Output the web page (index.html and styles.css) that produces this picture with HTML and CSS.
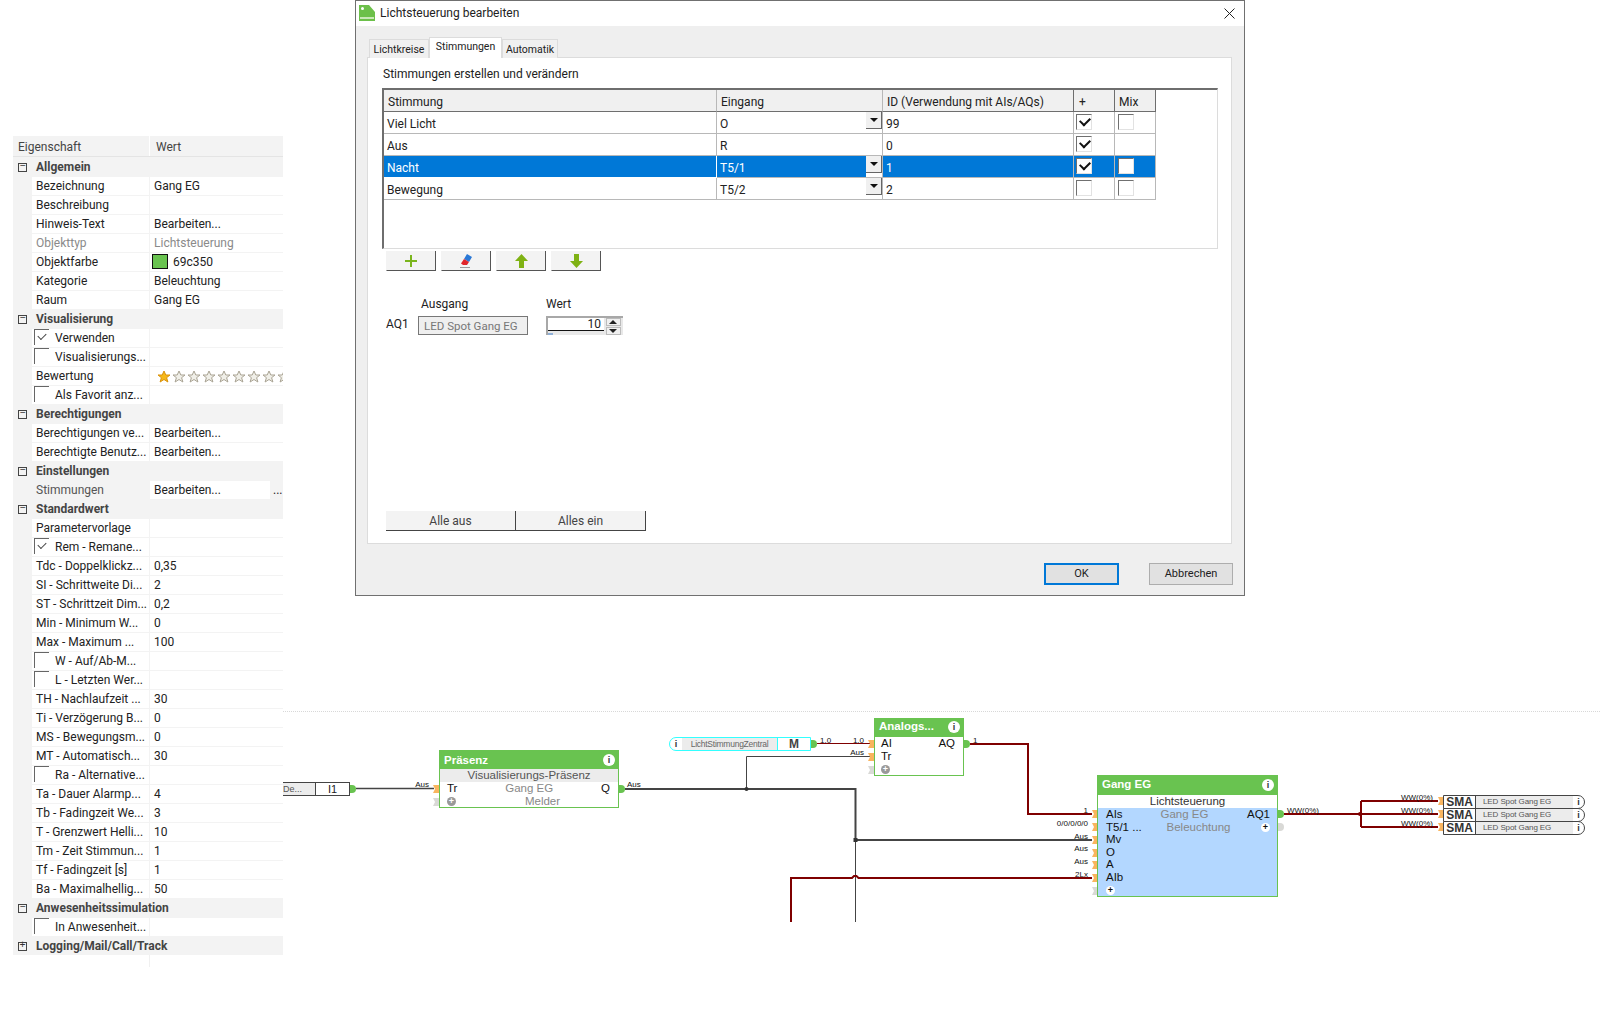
FILE: index.html
```html
<!DOCTYPE html>
<html lang="de">
<head>
<meta charset="utf-8">
<title>Lichtsteuerung bearbeiten</title>
<link rel="stylesheet" href="styles.css">
</head>
<body>
<svg class="defs" width="0" height="0" aria-hidden="true">
  <defs>
    <symbol id="star" viewBox="0 0 14 14"><path d="M7 1l1.8 4h4.2l-3.4 2.7 1.3 4.3L7 9.500 3.100 12l1.300-4.300L1 5h4.200z"/></symbol>
  </defs>
</svg>

<section class="panel">
  <div class="prow phead"><span class="ph1">Eigenschaft</span><span class="ph2">Wert</span></div>
  <div class="prow group"><i class="tog">&minus;</i><b>Allgemein</b></div>
  <div class="prow"><i></i><span class="n">Bezeichnung</span><span class="v">Gang EG</span></div>
  <div class="prow"><i></i><span class="n">Beschreibung</span><span class="v"></span></div>
  <div class="prow"><i></i><span class="n">Hinweis-Text</span><span class="v">Bearbeiten...</span></div>
  <div class="prow off"><i></i><span class="n">Objekttyp</span><span class="v">Lichtsteuerung</span></div>
  <div class="prow"><i></i><span class="n">Objektfarbe</span><span class="v"><em class="swatch"></em>69c350</span></div>
  <div class="prow"><i></i><span class="n">Kategorie</span><span class="v">Beleuchtung</span></div>
  <div class="prow"><i></i><span class="n">Raum</span><span class="v">Gang EG</span></div>
  <div class="prow group"><i class="tog">&minus;</i><b>Visualisierung</b></div>
  <div class="prow"><i></i><span class="n chk on">Verwenden</span><span class="v"></span></div>
  <div class="prow"><i></i><span class="n chk">Visualisierungs...</span><span class="v"></span></div>
  <div class="prow"><i></i><span class="n">Bewertung</span><span class="v stars">
    <svg class="star gold"><use href="#star"/></svg><svg class="star"><use href="#star"/></svg><svg class="star"><use href="#star"/></svg><svg class="star"><use href="#star"/></svg><svg class="star"><use href="#star"/></svg><svg class="star"><use href="#star"/></svg><svg class="star"><use href="#star"/></svg><svg class="star"><use href="#star"/></svg><svg class="star"><use href="#star"/></svg></span></div>
  <div class="prow"><i></i><span class="n chk">Als Favorit anz...</span><span class="v"></span></div>
  <div class="prow group"><i class="tog">&minus;</i><b>Berechtigungen</b></div>
  <div class="prow"><i></i><span class="n">Berechtigungen ve...</span><span class="v">Bearbeiten...</span></div>
  <div class="prow"><i></i><span class="n">Berechtigte Benutz...</span><span class="v">Bearbeiten...</span></div>
  <div class="prow group"><i class="tog">&minus;</i><b>Einstellungen</b></div>
  <div class="prow active"><i></i><span class="n">Stimmungen</span><span class="v"><span class="vbox">Bearbeiten...</span><span class="dots">...</span></span></div>
  <div class="prow group"><i class="tog">&minus;</i><b>Standardwert</b></div>
  <div class="prow"><i></i><span class="n">Parametervorlage</span><span class="v"></span></div>
  <div class="prow"><i></i><span class="n chk on">Rem - Remane...</span><span class="v"></span></div>
  <div class="prow"><i></i><span class="n">Tdc - Doppelklickz...</span><span class="v">0,35</span></div>
  <div class="prow"><i></i><span class="n">SI - Schrittweite Di...</span><span class="v">2</span></div>
  <div class="prow"><i></i><span class="n">ST - Schrittzeit Dim...</span><span class="v">0,2</span></div>
  <div class="prow"><i></i><span class="n">Min - Minimum W...</span><span class="v">0</span></div>
  <div class="prow"><i></i><span class="n">Max - Maximum ...</span><span class="v">100</span></div>
  <div class="prow"><i></i><span class="n chk">W - Auf/Ab-M...</span><span class="v"></span></div>
  <div class="prow"><i></i><span class="n chk">L - Letzten Wer...</span><span class="v"></span></div>
  <div class="prow"><i></i><span class="n">TH - Nachlaufzeit ...</span><span class="v">30</span></div>
  <div class="prow"><i></i><span class="n">Ti - Verzögerung B...</span><span class="v">0</span></div>
  <div class="prow"><i></i><span class="n">MS - Bewegungsm...</span><span class="v">0</span></div>
  <div class="prow"><i></i><span class="n">MT - Automatisch...</span><span class="v">30</span></div>
  <div class="prow"><i></i><span class="n chk">Ra - Alternative...</span><span class="v"></span></div>
  <div class="prow"><i></i><span class="n">Ta - Dauer Alarmp...</span><span class="v">4</span></div>
  <div class="prow"><i></i><span class="n">Tb - Fadingzeit We...</span><span class="v">3</span></div>
  <div class="prow"><i></i><span class="n">T - Grenzwert Helli...</span><span class="v">10</span></div>
  <div class="prow"><i></i><span class="n">Tm - Zeit Stimmun...</span><span class="v">1</span></div>
  <div class="prow"><i></i><span class="n">Tf - Fadingzeit [s]</span><span class="v">1</span></div>
  <div class="prow"><i></i><span class="n">Ba - Maximalhellig...</span><span class="v">50</span></div>
  <div class="prow group"><i class="tog">&minus;</i><b>Anwesenheitssimulation</b></div>
  <div class="prow"><i></i><span class="n chk">In Anwesenheit...</span><span class="v"></span></div>
  <div class="prow group"><i class="tog">+</i><b>Logging/Mail/Call/Track</b></div>
  <div class="ptail"></div>
</section>

<section class="diagram">
  <svg class="wires" viewBox="283 711 1317 220" width="1317" height="220">
    <line class="dotline" x1="283" y1="711.500" x2="1600" y2="711.500"/>
    <g fill="none" stroke="#444">
      <path stroke-width="1.500" d="M356 788.500H434"/>
      <path stroke-width="2" d="M625 789H855.500V840H1092"/>
      <path stroke-width="1" d="M746.500 789V756.500H871"/>
      <path stroke-width="1" d="M855.500 840V922"/>
    </g>
    <g fill="none" stroke="#7f0000">
      <path stroke-width="1" d="M817 743.500H870"/>
      <path stroke-width="2" d="M970 744H1028V814H1092"/>
      <path stroke-width="2" d="M791 922V878H852l2-2h2.500l2 2H1092"/>
      <path stroke-width="2" d="M1284 814H1438M1361 827V801M1361 801H1438M1361 827H1438"/>
    </g>
    <g fill="#333">
      <circle cx="746.500" cy="789" r="2"/>
      <rect x="853.500" y="838" width="4" height="4"/>
      <circle cx="1360" cy="814" r="2" fill="#7f0000"/>
    </g>
    <g class="pin-in">
      <path d="M433 785h6v8h-6l2-4z"/>
      <path d="M868 740h6v8h-6l2-4z"/><path d="M868 753h6v8h-6l2-4z"/>
      <path d="M1092 810h5v8h-5l2-4z"/><path d="M1092 823h5v8h-5l2-4z"/><path d="M1092 836h5v8h-5l2-4z"/><path d="M1092 849h5v8h-5l2-4z"/><path d="M1092 861h5v8h-5l2-4z"/><path d="M1092 874h5v8h-5l2-4z"/>
      <path d="M1438 797h5v8h-5l2-4z"/><path d="M1438 810h5v8h-5l2-4z"/><path d="M1438 823h5v8h-5l2-4z"/>
    </g>
    <g class="pin-free">
      <path d="M433 798h6v8h-6l2-4z"/><path d="M868 766h6v8h-6l2-4z"/><path d="M1092 887h5v8h-5l2-4z"/>
      <path d="M1278 823h2a4 4 0 0 1 0 8h-2z"/>
    </g>
    <g class="pin-out">
      <path d="M350 785h2a4 4 0 0 1 0 8h-2z"/><path d="M619 785h2a4 4 0 0 1 0 8h-2z"/>
      <path d="M811 740h2a4 4 0 0 1 0 8h-2z"/><path d="M964 740h2a4 4 0 0 1 0 8h-2z"/>
      <path d="M1278 810h2a4 4 0 0 1 0 8h-2z"/>
    </g>
    <g class="wlabel">
      <text x="429" y="787" text-anchor="end">Aus</text>
      <text x="627" y="787">Aus</text>
      <text x="820" y="743">1.0</text>
      <text x="864" y="743" text-anchor="end">1.0</text>
      <text x="864" y="755" text-anchor="end">Aus</text>
      <text x="973" y="743">1</text>
      <text x="1088" y="813" text-anchor="end">1</text>
      <text x="1088" y="826" text-anchor="end">0/0/0/0/0</text>
      <text x="1088" y="839" text-anchor="end">Aus</text>
      <text x="1088" y="851" text-anchor="end">Aus</text>
      <text x="1088" y="864" text-anchor="end">Aus</text>
      <text x="1088" y="877" text-anchor="end">2Lx</text>
      <text x="1287" y="813">WW(0%)</text>
      <text x="1401" y="800">WW(0%)</text>
      <text x="1401" y="813">WW(0%)</text>
      <text x="1401" y="826">WW(0%)</text>
    </g>
  </svg>

  <div class="stub stub-i1"><span class="stub-label">De...</span><span class="stub-key">I1</span></div>

  <div class="stub stub-m"><span class="stub-info">i</span><span class="stub-label">LichtStimmungZentral</span><span class="stub-key">M</span></div>

  <div class="node node-p">
    <div class="nhead"><span>Präsenz</span><span class="info">i</span></div>
    <div class="nsub">Visualisierungs-Präsenz</div>
    <div class="nrow"><span>Tr</span><span class="mid">Gang EG</span><span>Q</span></div>
    <div class="nrow"><span class="plus">+</span><span class="mid shift">Melder</span><span></span></div>
  </div>

  <div class="node node-a">
    <div class="nhead"><span>Analogs...</span><span class="info">i</span></div>
    <div class="nrow"><span>AI</span><span class="mid"></span><span>AQ</span></div>
    <div class="nrow"><span>Tr</span><span class="mid"></span><span></span></div>
    <div class="nrow"><span class="plus">+</span><span class="mid"></span><span></span></div>
  </div>

  <div class="node node-g">
    <div class="nhead"><span>Gang EG</span><span class="info">i</span></div>
    <div class="nsub white">Lichtsteuerung</div>
    <div class="gbody">
      <div class="nrow"><span>AIs</span><span class="mid left">Gang EG</span><span>AQ1</span></div>
      <div class="nrow"><span>T5/1 ...</span><span class="mid right">Beleuchtung</span><span class="plus white">+</span></div>
      <div class="nrow"><span>Mv</span></div>
      <div class="nrow"><span>O</span></div>
      <div class="nrow"><span>A</span></div>
      <div class="nrow"><span>AIb</span></div>
      <div class="nrow"><span class="plus white">+</span></div>
    </div>
  </div>

  <div class="sma-stack">
    <div class="sma"><b>SMA</b><span class="sma-l">LED Spot Gang EG</span><span class="sma-i">i</span></div>
    <div class="sma"><b>SMA</b><span class="sma-l">LED Spot Gang EG</span><span class="sma-i">i</span></div>
    <div class="sma"><b>SMA</b><span class="sma-l">LED Spot Gang EG</span><span class="sma-i">i</span></div>
  </div>
</section>

<section class="dialog">
  <header class="titlebar">
    <svg class="appicon" viewBox="0 0 16 16" width="16" height="16"><path fill="#6cc04a" d="M0 0h10l6 7v9H0z"/><circle cx="3.500" cy="3.500" r="1.500" fill="#fff"/><rect x="1" y="12" width="14" height="2" fill="#c9e8b8"/></svg>
    <span class="title">Lichtsteuerung bearbeiten</span>
    <svg class="closex" viewBox="0 0 11 11" width="11" height="11"><path d="M.5.500l10 10M10.500.500l-10 10" stroke="#222" fill="none"/></svg>
  </header>
  <div class="dbody">
    <nav class="tabs">
      <span class="tab t1">Lichtkreise</span>
      <span class="tab t2 sel">Stimmungen</span>
      <span class="tab t3">Automatik</span>
    </nav>
    <div class="pane">
      <div class="pane-title">Stimmungen erstellen und verändern</div>
      <div class="gridbox">
        <div class="grow ghead">
          <span class="c1">Stimmung</span><span class="c2">Eingang</span><span class="c3">ID (Verwendung mit AIs/AQs)</span><span class="c4">+</span><span class="c5">Mix</span>
        </div>
        <div class="grow">
          <span class="c1">Viel Licht</span><span class="c2">O<em class="combo"></em></span><span class="c3">99</span><span class="c4"><em class="cb on"></em></span><span class="c5"><em class="cb"></em></span>
        </div>
        <div class="grow">
          <span class="c1">Aus</span><span class="c2">R</span><span class="c3">0</span><span class="c4"><em class="cb on"></em></span><span class="c5"></span>
        </div>
        <div class="grow selrow">
          <span class="c1">Nacht</span><span class="c2">T5/1<em class="combo"></em></span><span class="c3">1</span><span class="c4"><em class="cb on"></em></span><span class="c5"><em class="cb"></em></span>
        </div>
        <div class="grow">
          <span class="c1">Bewegung</span><span class="c2">T5/2<em class="combo"></em></span><span class="c3">2</span><span class="c4"><em class="cb"></em></span><span class="c5"><em class="cb"></em></span>
        </div>
      </div>
      <div class="toolbar">
        <button class="tbtn"><svg viewBox="0 0 12 12" width="12" height="12"><path d="M5 0h2v5h5v2H7v5H5V7H0V5h5z" fill="#7ab51d"/></svg></button>
        <button class="tbtn"><svg viewBox="0 0 14 16" width="14" height="16"><path d="M8 1l5 3-3 5-5-3z" fill="#2a78d6"/><path d="M5 6l5 3-2 3H4L2 10.500z" fill="#e0242a"/><rect x="1" y="14" width="10" height="1" fill="#999"/></svg></button>
        <button class="tbtn"><svg viewBox="0 0 13 14" width="13" height="14"><path d="M6.500 0L13 7H9v7H4V7H0z" fill="#7fb214"/></svg></button>
        <button class="tbtn"><svg viewBox="0 0 13 14" width="13" height="14"><path d="M6.500 14L0 7h4V0h5v7h4z" fill="#7fb214"/></svg></button>
      </div>
      <div class="outs">
        <span></span><span class="lab-a">Ausgang</span><span>Wert</span>
        <span class="aq">AQ1</span>
        <span class="field">LED Spot Gang EG</span>
        <span class="spin"><span class="spin-val">10</span><span class="spin-btns"><i class="up"></i><i class="down"></i></span><i class="spin-mark"></i></span>
      </div>
      <div class="allrow">
        <button class="allbtn">Alle aus</button>
        <button class="allbtn">Alles ein</button>
      </div>
    </div>
    <footer class="dfoot">
      <button class="dbtn ok">OK</button>
      <button class="dbtn">Abbrechen</button>
    </footer>
  </div>
</section>
</body>
</html>
```
FILE: styles.css
```css
* { box-sizing: border-box; }
html, body { margin: 0; padding: 0; }
body {
  position: relative;
  width: 1600px;
  height: 1024px;
  overflow: hidden;
  background: #fff;
  font: 12px/16px Roboto, "Liberation Sans", sans-serif;
  color: #222;
}
button { font: inherit; color: inherit; padding: 0; cursor: default; }
em, i { font-style: normal; }
.defs { position: absolute; }

/* property panel */
.panel { position: absolute; left: 13px; top: 136px; width: 270px; }
.prow {
  display: grid;
  grid-template-columns: 18px 117px 133px;
  column-gap: 1px;
  height: 19px;
  background: #f3f3f3;
  line-height: 18px;
}
.prow .n, .prow .v {
  display: block;
  margin-top: 1px;
  height: 18px;
  background: #fff;
  white-space: nowrap;
  overflow: hidden;
}
.prow .n { padding-left: 4px; }
.prow .v { padding-left: 4px; position: relative; }
.phead {
  display: flex;
  height: 21px;
  line-height: 22px;
  border-bottom: 1px solid #e4e4e4;
  color: #444;
}
.ph1 { width: 137px; padding-left: 5px; border-right: 1px solid #fff; }
.ph2 { padding-left: 5px; }
.group { display: flex; align-items: center; line-height: 19px; padding-top: 2px; }
.group b { margin-left: 8px; color: #444; font-weight: 700; }
.tog {
  width: 9px; height: 9px; margin-left: 5px;
  border: 1px solid #444;
  font: 10px/6px "Liberation Mono", monospace;
  text-align: center;
  color: #333;
}
.off .n, .off .v { color: #8a8a8a; }
.swatch {
  display: inline-block;
  width: 16px; height: 15px;
  margin: 1px 5px 0 -2px;
  vertical-align: top;
  background: #69c350;
  border: 1px solid #111;
}
.chk { position: relative; padding-left: 23px !important; overflow: visible !important; }
.chk::before {
  content: "";
  position: absolute; left: 2px; top: 0;
  width: 14px; height: 15px;
  border-left: 1px solid #666;
  border-top: 1px solid #666;
}
.chk.on::after {
  content: "";
  position: absolute; left: 6px; top: 4px;
  width: 7px; height: 4px;
  border-left: 1.200px solid #444;
  border-bottom: 1.200px solid #444;
  transform: rotate(-45deg);
}
.active .n { background: transparent; color: #555; }
.active .v { background: transparent; padding: 0; display: flex; }
.vbox { width: 120px; background: #fff; padding-left: 4px; }
.dots { padding-left: 3px; }
.stars { display: flex; align-items: center; padding: 3px 0 0 7px !important; overflow: hidden; }
.star { flex: none; width: 14px; height: 14px; margin-right: 1px; fill: #f0efe8; stroke: #a9a393; stroke-width: 1; }
.star.gold { fill: #f6b818; stroke: #d9920c; }
.ptail { width: 1px; height: 12px; margin-left: 136px; background: #f0f0f0; }

/* diagram */
.diagram { position: absolute; left: 283px; top: 711px; width: 1317px; height: 220px; font-family: "Liberation Sans", Arial, sans-serif; }
.wires { position: absolute; left: 0; top: 0; }
.dotline { stroke: #d8d8d8; stroke-width: 1; stroke-dasharray: 1 1; }
.pin-in { fill: #f9b55f; }
.pin-free { fill: #d9d9d6; }
.pin-out { fill: #69c350; }
.wlabel { font: 8px "Liberation Sans", Arial, sans-serif; fill: #111; }

.stub { position: absolute; display: flex; background: #fff; }
.stub-i1 { left: 0; top: 71px; width: 67px; height: 14px; border: 1px solid #444; border-left: 0; font-size: 11px; line-height: 12px; }
.stub-i1 .stub-label { width: 33px; background: #ececec; border-right: 1px solid #444; font-size: 9px; color: #555; }
.stub-i1 .stub-key { flex: 1; text-align: center; color: #222; }
.stub-m { left: 386px; top: 26px; width: 142px; height: 14px; border: 1px solid #3ff; border-radius: 7px 0 0 7px; line-height: 13px; }
.stub-info { width: 12px; text-align: center; font-weight: 700; font-size: 9px; color: #333; }
.stub-m .stub-label { width: 96px; background: #ececec; font-size: 8.500px; color: #666; text-align: center; letter-spacing: -.25px; border-right: 1px solid #3ff; }
.stub-m .stub-key { flex: 1; text-align: center; font-weight: 700; font-size: 12px; color: #444; }

.node { position: absolute; border: 1px solid #69c350; background: #fff; font-size: 11.500px; line-height: 13px; color: #111; }
.node-p { left: 156px; top: 39px; width: 180px; height: 58px; }
.node-a { left: 591px; top: 7px; width: 90px; height: 58px; }
.node-g { left: 814px; top: 64px; width: 181px; height: 122px; }
.nhead {
  display: flex; align-items: center; justify-content: space-between;
  height: 19px; margin: -1px -1px 0;
  padding: 0 4px 0 5px;
  background: #69c350;
  color: #fff; font-weight: 700; font-size: 11.500px;
}
.node-a .nhead { padding-bottom: 2px; }
.node-p .nhead { padding-top: 1px; }
.node-g .nhead { height: 20px; padding-bottom: 1px; }
.info {
  width: 12px; height: 12px; border-radius: 50%;
  background: #fff; color: #333;
  font-size: 9px; line-height: 12px; font-weight: 700; text-align: center;
}
.nsub { height: 13px; background: #ececec; text-align: center; color: #555; }
.nsub.white { background: #fff; color: #333; }
.nrow { display: grid; grid-template-columns: auto 1fr auto; height: 13px; padding: 0 8px 0 7px; }
.mid { text-align: center; color: #888; }
.shift { padding-left: 19px; }
.left { padding-right: 34px; }
.right { padding-right: 20px; }
.node-a .nrow { padding: 0 8px 0 6px; }
.plus {
  display: block;
  width: 9px; height: 9px; margin-top: 2px;
  border-radius: 50%;
  background: #999; color: #fff;
  font: 700 9px/9px "Liberation Sans", sans-serif;
  text-align: center;
}
.plus.white { background: #fff; color: #111; }
.gbody { background: #b3d7ff; height: 88px; }
.gbody .nrow { height: 12.600px; padding: 0 7px 0 8px; }
.gbody .nrow > span:first-child { min-width: 50px; }
.gbody .plus { min-width: 0 !important; width: 9px; }

.sma-stack { position: absolute; left: 1160px; top: 84px; width: 142px; }
.sma {
  display: flex; height: 13.500px;
  border: 1px solid #444; border-radius: 0 7px 7px 0;
  background: #fff; margin-bottom: -.500px;
  line-height: 12px;
}
.sma b { width: 32px; border-right: 1px solid #444; text-align: center; font-size: 12px; color: #333; }
.sma-l { width: 97px; padding-left: 7px; background: #ececec; font-size: 8px; letter-spacing: -.1px; color: #555; white-space: nowrap; }
.sma-i { flex: 1; text-align: center; font-size: 9px; font-weight: 700; color: #333; }

/* dialog */
.dialog {
  position: absolute; left: 355px; top: 0;
  width: 890px; height: 596px;
  border: 1px solid #707070;
  display: flex; flex-direction: column;
  background: #efefef;
  color: #222;
}
.titlebar { display: flex; align-items: center; height: 25px; background: #fff; padding: 0 9px 1px 3px; }
.appicon { flex: none; }
.title { margin-left: 5px; flex: 1; }
.dbody { flex: 1; padding: 11px 12px 0 11px; display: flex; flex-direction: column; }
.tabs { display: flex; align-items: flex-end; height: 21px; padding-left: 2px; position: relative; z-index: 1; margin-bottom: -1px; }
.tab { height: 19px; border: 1px solid #dcdcdc; border-bottom: 0; background: #f0f0f0; line-height: 19px; text-align: center; font-size: 10.500px; }
.t1 { width: 60px; }
.t2 { width: 73px; height: 21px; background: #fff; line-height: 17px; }
.t3 { width: 56px; }
.pane {
  height: 487px;
  background: #fff;
  border: 1px solid #dcdcdc;
  padding: 8px 13px 12px 14px;
  display: flex; flex-direction: column;
}
.pane-title { height: 16px; padding-left: 1px; }
.gridbox {
  margin-top: 6px; height: 161px;
  border-top: 2px solid #6e6e6e;
  border-left: 2px solid #6e6e6e;
  border-right: 1px solid #dcdcdc;
  border-bottom: 1px solid #dcdcdc;
}
.grow { display: grid; grid-template-columns: 333px 166px 191px 41px 41px; grid-template-rows: 22px; width: 772px; height: 22px; line-height: 22px; }
.grow > span { position: relative; border-right: 1px solid #b8b8b8; border-bottom: 1px solid #b8b8b8; padding: 1px 0 0 3px; white-space: nowrap; }
.ghead > span { background: #f0f0f0; border-bottom-color: #6e6e6e; padding-left: 4px; }
.ghead .c3, .ghead .c4, .ghead .c5 { border-right-color: #6e6e6e; }
.ghead .c4 { padding-left: 5px; }
.selrow > span { background: #0078d7; color: #fff; }
.selrow .c1 { border: 1px solid #fff; border-width: 0 1px 1px 0; }
.cb {
  position: absolute; left: 2px; top: 2px;
  width: 16px; height: 16px;
  background: #fff;
  border: 1px solid #e2e2e2;
  border-top-color: #707070; border-left-color: #707070;
}
.c5 .cb { left: 3px; }
.cb.on::after {
  content: "";
  position: absolute; left: 3px; top: 2px;
  width: 8px; height: 5px;
  border-left: 2px solid #111;
  border-bottom: 2px solid #111;
  transform: rotate(-45deg);
}
.combo {
  position: absolute; right: 0; top: 0;
  width: 16px; height: 17px;
  background: #f0f0f0;
  border-right: 1px solid #666;
  border-bottom: 1px solid #666;
}
.combo::after {
  content: "";
  position: absolute; left: 4px; top: 6px;
  border: 4px solid transparent;
  border-top: 4px solid #111;
  border-bottom: 0;
}
.selrow .c2::after {
  content: ""; position: absolute; right: 0; top: 17px; width: 16px; height: 4px; background: #fff;
}
.toolbar { display: flex; gap: 5px; margin: 2px 0 0 4px; height: 20px; }
.tbtn {
  display: flex; align-items: center; justify-content: center;
  width: 50px; height: 20px;
  background: #f3f3f3;
  border: 0;
  border-right: 1px solid #555;
  border-bottom: 1px solid #555;
  border-left: 1px solid #f3f3f3;
}
.outs {
  display: grid;
  grid-template-columns: 32px 128px 77px;
  grid-template-rows: 16px 19px;
  row-gap: 4px;
  margin: 25px 0 0 4px;
}
.lab-a { padding-left: 3px; }
.field {
  width: 110px;
  border: 1px solid #777;
  background: #efefef;
  color: #777;
  font-size: 11.500px;
  line-height: 18px;
  padding-left: 5px;
  white-space: nowrap;
}
.spin {
  position: relative;
  display: flex;
  height: 19px;
  background: #e8e8e8;
  border-top: 2px solid #a8a8a8;
  border-left: 2px solid #a8a8a8;
  padding-right: 2px;
}
.spin-val { width: 56px; height: 13px; background: #fff; border-bottom: 1px solid #111; text-align: right; line-height: 12px; padding-right: 3px; margin-right: 2px; }
.spin-btns { flex: 1; display: flex; flex-direction: column; gap: 1px; }
.spin-btns i { position: relative; flex: 1; background: #f0f0f0; border: 1px solid #bbb; }
.spin-btns i::after { content: ""; position: absolute; left: 2px; border: 4px solid transparent; }
.up::after { top: 1px; border-top: 0 !important; border-bottom: 4px solid #222 !important; }
.down::after { top: 1px; border-bottom: 0 !important; border-top: 4px solid #222 !important; }
.spin-mark { position: absolute; left: 0; bottom: 0; width: 5px; height: 2px; background: #8fb0d8; }
.allrow { display: flex; margin: auto 0 0 4px; }
.allbtn {
  height: 20px; width: 130px;
  background: #f3f3f3;
  border: 0;
  border-right: 1px solid #444;
  border-bottom: 1px solid #444;
  color: #444;
}
.dfoot { display: flex; justify-content: flex-end; gap: 30px; margin: 19px -1px 0 0; }
.dbtn { width: 84px; height: 22px; background: #e1e1e1; border: 1px solid #adadad; font-size: 11px; }
.ok { width: 75px; border: 2px solid #0078d7; }
```
